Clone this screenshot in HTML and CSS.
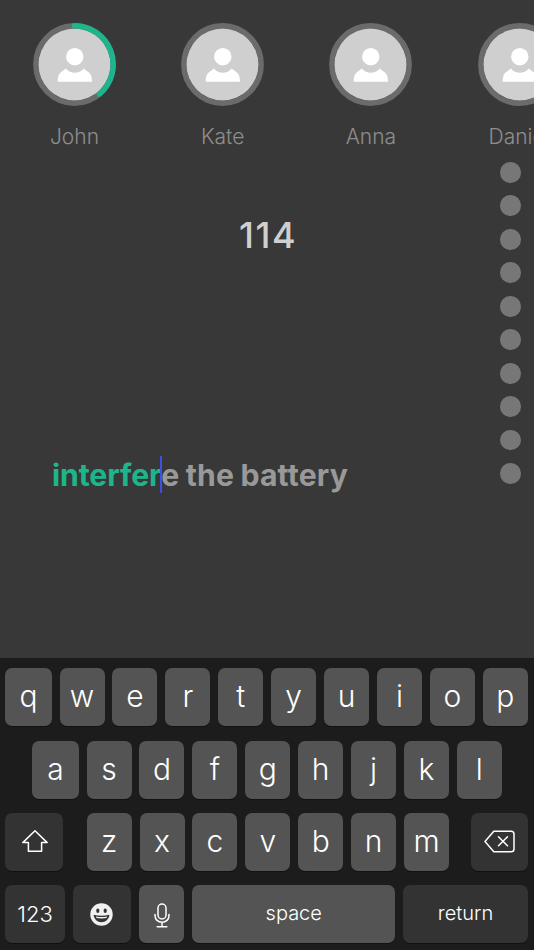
FILE: index.html
```html
<!DOCTYPE html>
<html lang="en">
<head>
<meta charset="utf-8">
<title>Typing</title>
<link rel="stylesheet" href="styles.css">
</head>
<body>
<div class="screen">
  <div class="players">
    <div class="player">
      <svg class="avatar" viewBox="0 0 83 83"><circle class="ring" cx="41.5" cy="41.5" r="38.7"/><circle class="face" cx="41.5" cy="41.5" r="36"/><path class="arc" d="M41.5 2.8A38.7 38.7 0 0 1 66.4 71.1"/><circle class="person" cx="41.8" cy="33.7" r="8.7"/><path class="person" d="M24.7 58.7C24.7 53 26 50.5 29 48.5L33 45.5C35 48.5 38.5 49.8 41.8 49.8S48.6 48.5 50.6 45.5L54.6 48.5C57.6 50.5 59 53 59 58.7Z"/></svg>
      <div class="name">John</div>
    </div>
    <div class="player">
      <svg class="avatar" viewBox="0 0 83 83"><circle class="ring" cx="41.5" cy="41.5" r="38.7"/><circle class="face" cx="41.5" cy="41.5" r="36"/><circle class="person" cx="41.8" cy="33.7" r="8.7"/><path class="person" d="M24.7 58.7C24.7 53 26 50.5 29 48.5L33 45.5C35 48.5 38.5 49.8 41.8 49.8S48.6 48.5 50.6 45.5L54.6 48.5C57.6 50.5 59 53 59 58.7Z"/></svg>
      <div class="name">Kate</div>
    </div>
    <div class="player">
      <svg class="avatar" viewBox="0 0 83 83"><circle class="ring" cx="41.5" cy="41.5" r="38.7"/><circle class="face" cx="41.5" cy="41.5" r="36"/><circle class="person" cx="41.8" cy="33.7" r="8.7"/><path class="person" d="M24.7 58.7C24.7 53 26 50.5 29 48.5L33 45.5C35 48.5 38.5 49.8 41.8 49.8S48.6 48.5 50.6 45.5L54.6 48.5C57.6 50.5 59 53 59 58.7Z"/></svg>
      <div class="name">Anna</div>
    </div>
    <div class="player">
      <svg class="avatar" viewBox="0 0 83 83"><circle class="ring" cx="41.5" cy="41.5" r="38.7"/><circle class="face" cx="41.5" cy="41.5" r="36"/><circle class="person" cx="41.8" cy="33.7" r="8.7"/><path class="person" d="M24.7 58.7C24.7 53 26 50.5 29 48.5L33 45.5C35 48.5 38.5 49.8 41.8 49.8S48.6 48.5 50.6 45.5L54.6 48.5C57.6 50.5 59 53 59 58.7Z"/></svg>
      <div class="name">Daniel</div>
    </div>
  </div>
  <div class="game">
    <div class="play">
      <div class="score">114</div>
      <div class="phrase"><span class="typed">interfer</span><span class="caret"></span><span class="rest">e the battery</span></div>
    </div>
    <div class="dots">
      <span class="dot"></span><span class="dot"></span><span class="dot"></span><span class="dot"></span><span class="dot"></span>
      <span class="dot"></span><span class="dot"></span><span class="dot"></span><span class="dot"></span><span class="dot"></span>
    </div>
  </div>
  <div class="keyboard">
    <div class="row row-top">
      <div class="key first">q</div><div class="key">w</div><div class="key">e</div><div class="key">r</div><div class="key">t</div><div class="key">y</div><div class="key">u</div><div class="key">i</div><div class="key">o</div><div class="key">p</div>
    </div>
    <div class="row row-home">
      <div class="key first">a</div><div class="key">s</div><div class="key">d</div><div class="key">f</div><div class="key">g</div><div class="key">h</div><div class="key">j</div><div class="key">k</div><div class="key">l</div>
    </div>
    <div class="row row-top">
      <div class="key dark shift"><svg class="shift-icon" width="26" height="23" viewBox="0 0 26 23"><path class="glyph" d="M13 .8L.8 12.6H6.4V21.2H19.6V12.6H25.2Z"/></svg></div>
      <div class="key">z</div><div class="key">x</div><div class="key">c</div><div class="key">v</div><div class="key">b</div><div class="key">n</div><div class="key">m</div>
      <div class="key dark delete"><svg width="31" height="23" viewBox="0 0 31 23"><path class="glyph" d="M9.8 1.2H27.2C28.8 1.2 30 2.4 30 4V19C30 20.6 28.8 21.8 27.2 21.8H9.8L1 11.5Z"/><path class="glyph" d="M14.5 6.8L23.5 15.8M23.5 6.8L14.5 15.8"/></svg></div>
    </div>
    <div class="row row-top">
      <div class="key dark small num">123</div>
      <div class="key dark emoji"><svg width="23" height="23" viewBox="0 0 23 23"><circle class="emoji-face" cx="11.5" cy="11.5" r="11.2"/><ellipse class="emoji-eye" cx="7.8" cy="7.8" rx="1.6" ry="2.2"/><ellipse class="emoji-eye" cx="15.2" cy="7.8" rx="1.6" ry="2.2"/><path class="emoji-eye" d="M3.6 11.8C8.5 13.2 14.5 13.2 19.4 11.8C19 16.4 15.6 19.2 11.5 19.2S4 16.4 3.6 11.8Z"/><path class="emoji-face" d="M6 13.4C9.5 14.1 13.5 14.1 17 13.4L16.6 15C13.5 15.6 9.5 15.6 6.4 15Z"/></svg></div>
      <div class="key mic"><svg width="16" height="25" viewBox="0 0 16 25"><rect class="glyph" x="4" y="1" width="8" height="15" rx="4"/><path class="glyph" d="M1 11.5V12.5C1 16.5 4 19.3 8 19.3S15 16.5 15 12.5V11.5M8 19.3V23.7M3.2 23.7H12.8"/></svg></div>
      <div class="key small space">space</div>
      <div class="key dark small return">return</div>
    </div>
  </div>
</div>
</body>
</html>
```
FILE: styles.css
```css
* { box-sizing: border-box; }
html, body { margin: 0; padding: 0; }
body { background: #383838; font-family: Inter, "Noto Sans", sans-serif; }
.screen { width: 534px; height: 950px; overflow: hidden; display: flex; flex-direction: column; background: #383838; }

.players { display: flex; height: 162px; padding-top: 23px; padding-left: 33px; gap: 65.2px; flex: none; overflow: hidden; }
.player { width: 83px; flex: none; display: flex; flex-direction: column; align-items: center; }
.avatar { width: 83px; height: 83px; display: block; flex: none; }
.ring { fill: none; stroke: #6b6b6b; stroke-width: 5.4; }
.face { fill: #cfcfcf; }
.arc { fill: none; stroke: #1fb58c; stroke-width: 5.4; stroke-linecap: round; }
.person { fill: #fff; }
.name { margin-top: 19px; font-size: 21px; font-weight: 300; line-height: 24px; color: #8e8e8e; white-space: nowrap; }

.game { flex: 1; display: flex; min-height: 0; }
.play { flex: 1; min-width: 0; }
.score { margin-top: 51px; padding-left: 36px; text-align: center; font-size: 36px; font-weight: 500; letter-spacing: 1.6px; line-height: 44px; color: #cfcfcf; }
.phrase { margin-top: 198px; padding-left: 52px; font-size: 30.2px; font-weight: 700; line-height: 40px; white-space: nowrap; word-spacing: -1px; }
.typed { color: #1fb58c; letter-spacing: -0.12px; }
.rest { color: #999; letter-spacing: 0.16px; }
.caret { position: relative; }
.caret::after { content: ""; position: absolute; left: -1.5px; top: -1px; width: 2.4px; height: 37px; background: #3d50e6; }
.dots { width: 33.8px; flex: none; display: flex; flex-direction: column; gap: 12.9px; }
.dot { width: 20.6px; height: 20.6px; border-radius: 50%; background: #777; flex: none; }

.keyboard { height: 292px; flex: none; background: #1c1c1c; padding-top: 10.3px; display: flex; flex-direction: column; gap: 14.3px; }
.row { display: flex; gap: 7.9px; height: 58px; flex: none; }
.row-top { padding-left: 5.3px; }
.row-home { padding-left: 32.3px; }
.key { width: 45px; height: 58px; flex: none; border-radius: 7px; background: #545454; box-shadow: 0 1px 0 #111; color: #fff; font-size: 30px; font-weight: 300; display: flex; align-items: center; justify-content: center; padding-bottom: 2px; }
.key.first { width: 46.4px; }
.key.dark { background: #333; }
.key.small { font-size: 20px; font-weight: 300; }
.key svg { margin-top: 2px; }
.mic { padding-bottom: 0; }
.shift { width: 58px; margin-right: 15.5px; }
.shift-icon { margin-left: 2px; }
.delete { width: 57px; margin-left: 14.4px; }
.key.num { width: 59.4px; font-size: 22px; padding-bottom: 0; }
.emoji { width: 58.7px; }
.space { width: 203.4px; }
.return { width: 124.3px; }
.glyph { fill: none; stroke: #fff; stroke-width: 1.5; stroke-linejoin: round; stroke-linecap: round; }
.emoji-face { fill: #f0f0f0; }
.emoji-eye { fill: #333; }
```
